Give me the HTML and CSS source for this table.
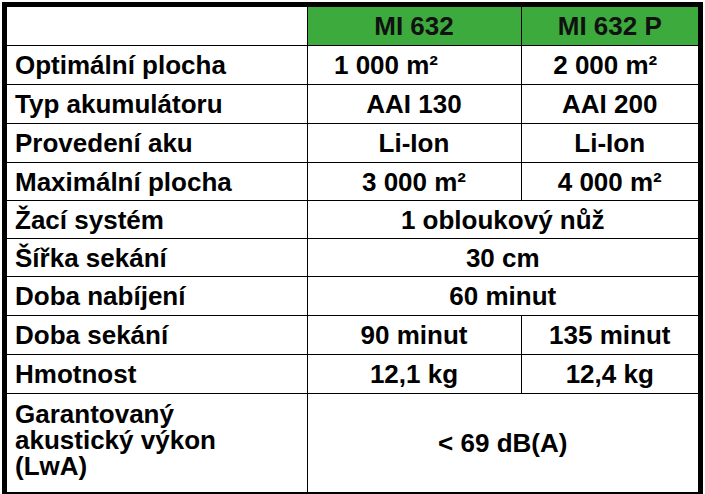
FILE: index.html
```html
<!DOCTYPE html>
<html lang="cs">
<head>
<meta charset="utf-8">
<title>MI 632</title>
<link rel="stylesheet" href="styles.css">
</head>
<body>
<div class="frame">
<table class="specs">
<colgroup><col class="c1"><col class="c2"><col class="c3"></colgroup>
<tr class="head"><td class="label"></td><td class="model">MI 632</td><td class="model">MI 632 P</td></tr>
<tr><td class="label">Optimální plocha</td><td class="val shift-a">1 000 m²</td><td class="val shift-b">2 000 m²</td></tr>
<tr><td class="label">Typ akumulátoru</td><td class="val">AAI 130</td><td class="val">AAI 200</td></tr>
<tr><td class="label">Provedení aku</td><td class="val">Li-Ion</td><td class="val">Li-Ion</td></tr>
<tr class="short"><td class="label">Maximální plocha</td><td class="val">3 000 m²</td><td class="val">4 000 m²</td></tr>
<tr class="short"><td class="label">Žací systém</td><td class="val" colspan="2">1 obloukový nůž</td></tr>
<tr class="short"><td class="label">Šířka sekání</td><td class="val" colspan="2">30 cm</td></tr>
<tr><td class="label">Doba nabíjení</td><td class="val" colspan="2">60 minut</td></tr>
<tr><td class="label">Doba sekání</td><td class="val">90 minut</td><td class="val">135 minut</td></tr>
<tr><td class="label">Hmotnost</td><td class="val">12,1 kg</td><td class="val">12,4 kg</td></tr>
<tr class="tall"><td class="label multi">Garantovaný<br>akustický výkon<br>(LwA)</td><td class="val" colspan="2">&lt; 69 dB(A)</td></tr>
</table>
</div>
</body>
</html>
```
FILE: styles.css
```css
html, body {
  margin: 0;
  padding: 0;
  background: #fff;
}
body {
  font-family: "Liberation Sans", Arial, sans-serif;
  font-weight: bold;
  font-size: 26px;
  color: #000;
}
.frame {
  margin: 2px;
  width: 691px;
  border: 5px solid #000;
}
.specs {
  width: 691px;
  border-collapse: collapse;
  table-layout: fixed;
}
.c1 { width: 300px; }
.c2 { width: 214px; }
.c3 { width: 177px; }
.specs td {
  border: 1px solid #000;
  padding: 0;
  height: 38px;
  vertical-align: middle;
  line-height: 28px;
  white-space: nowrap;
}
.specs tr:first-child td { border-top: none; }
.specs tr:last-child td { border-bottom: none; }
.specs td:first-child { border-left: none; }
.specs td:last-child { border-right: none; }
.specs tr.head td { height: 38px; }
.specs tr.short td { height: 37px; }
.specs tr.tall td { height: 91px; }
.label {
  text-align: left;
  padding-left: 8px !important;
}
.specs td.multi {
  line-height: 26px;
  vertical-align: top;
  padding-top: 7px;
}
.model {
  background: #3caa3c;
  text-align: center;
  color: #111;
}
.val { text-align: center; }
.shift-a { padding-right: 56px !important; }
.shift-b { padding-right: 9px !important; }
```
